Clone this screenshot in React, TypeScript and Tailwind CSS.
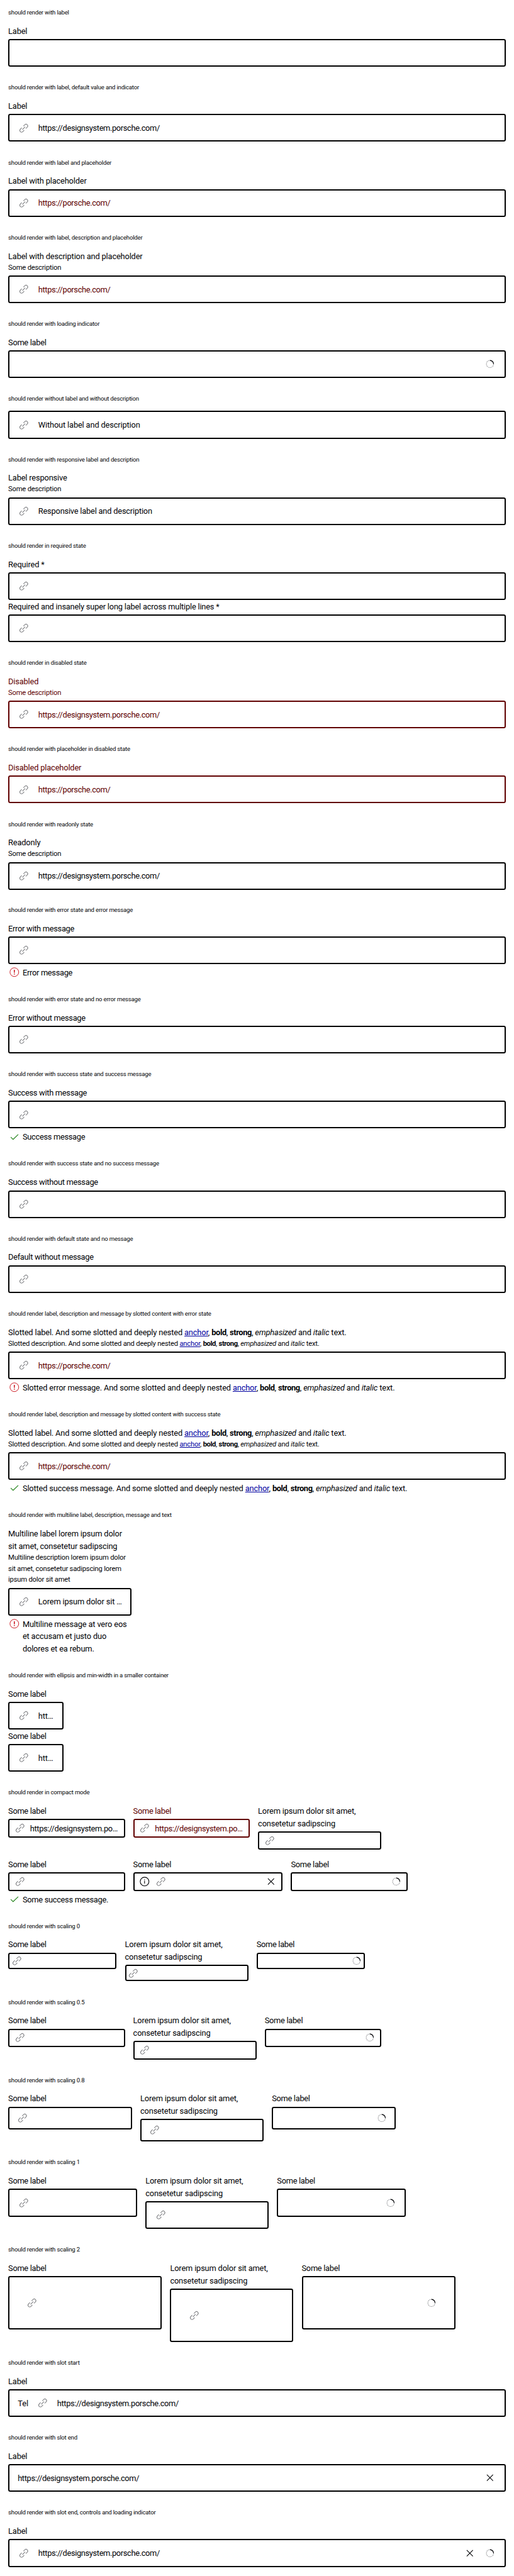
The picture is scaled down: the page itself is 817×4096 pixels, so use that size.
import type { ReactNode } from 'react';
import clsx from 'clsx';

/* ---------- icons (24 unit grid) ---------- */

const icon = 'size-6 shrink-0 overflow-visible';

function LinkIcon() {
  return (
    <svg viewBox="0 0 24 24" className={icon} fill="none" stroke="#88898c" strokeWidth="1.4">
      <g transform="rotate(-45 12 12)">
        <path d="M9.8 8.7H5.8a3.3 3.3 0 0 0 0 6.6H9.8" />
        <path d="M14.2 8.7h4a3.3 3.3 0 0 1 0 6.6h-4" />
        <path d="M8.2 12h7.6" />
      </g>
    </svg>
  );
}

function Spinner() {
  return (
    <svg viewBox="0 0 24 24" className={icon} fill="none">
      <circle cx="12" cy="12" r="7" stroke="#9fa0a3" strokeWidth="1.4" strokeDasharray="2.1 1.04" />
      <path d="M12 5a7 7 0 0 1 7 7" stroke="#010205" strokeWidth="1.4" />
    </svg>
  );
}

function CloseIcon() {
  return (
    <svg viewBox="0 0 24 24" className={icon} fill="none" stroke="#010205" strokeWidth="1.3">
      <path d="M6 6l12 12M18 6L6 18" />
    </svg>
  );
}

function InfoIcon() {
  return (
    <svg viewBox="0 0 24 24" className={icon} fill="none" stroke="#010205" strokeWidth="1.3">
      <circle cx="12" cy="12" r="8.5" />
      <path d="M12 10.3V16M12 7.8v1.3" />
    </svg>
  );
}

function ErrorIcon() {
  return (
    <svg viewBox="0 0 24 24" className={icon} fill="none" stroke="#cc1922" strokeWidth="1.2">
      <circle cx="12" cy="12" r="8.5" />
      <path d="M12 7.5v5.7M12 14.6v1.8" strokeWidth="1.9" />
    </svg>
  );
}

function CheckIcon() {
  return (
    <svg viewBox="0 0 24 24" className={icon} fill="none" stroke="#197e10" strokeWidth="1.3">
      <path d="M5 12.4l4.6 4.4L19.6 7.2" />
    </svg>
  );
}

/* ---------- building blocks ---------- */

function Section({ title, className, children }: { title: string; className?: string; children: ReactNode }) {
  return (
    <section className={clsx('px-4 pt-4', className ?? 'pb-4')}>
      <h2 className="mb-4 text-[9.56px] leading-4 tracking-[-0.18px] whitespace-nowrap">{title}</h2>
      {children}
    </section>
  );
}

const sizes = {
  s0: { box: 'h-8 px-0.5', gap: 'gap-1' },
  compact: { box: 'h-9 px-2', gap: 'gap-2' },
  s08: { box: 'h-11 px-3.25', gap: 'gap-3' },
  normal: { box: 'h-13.5 px-4', gap: 'gap-4' },
  s2: { box: 'h-26 px-8', gap: 'gap-8' },
};

type FieldProps = {
  label?: ReactNode;
  desc?: ReactNode;
  value?: string;
  placeholder?: boolean;
  disabled?: boolean;
  noIcon?: boolean;
  start?: ReactNode;
  end?: ReactNode;
  state?: 'error' | 'success';
  message?: ReactNode;
  size?: keyof typeof sizes;
  width?: string;
  /** tracking of the label text */
  track?: string;
  valueTrack?: string;
};

function Field({
  label,
  desc,
  value,
  placeholder,
  disabled,
  noIcon,
  start,
  end,
  state,
  message,
  size = 'normal',
  width,
  track = 'tracking-[-0.16px]',
  valueTrack = 'tracking-[-0.35px]',
}: FieldProps) {
  const s = sizes[size];
  return (
    <div className={clsx('flex flex-col', width, disabled ? 'text-[#600000]' : 'text-[#010205]')}>
      {label && <div className={clsx('-mb-[0.6px] pt-[0.6px] leading-6', track)}>{label}</div>}
      {desc && <div className="text-[11.19px] leading-5.5 tracking-[-0.19px]">{desc}</div>}
      <div
        className={clsx(
          'flex items-center rounded-[3.3px] border-2',
          s.box,
          s.gap,
          label && 'mt-1',
          disabled ? 'border-[#600000]' : 'border-black',
        )}
      >
        {start}
        {!noIcon && <LinkIcon />}
        <span
          className={clsx(
            'min-w-0 grow pt-px leading-6 whitespace-nowrap',
            valueTrack,
            placeholder && 'text-[#600000]',
          )}
        >
          {value}
        </span>
        {end}
      </div>
      {message && (
        <div className="mt-1 flex gap-1">
          {state === 'error' ? <ErrorIcon /> : <CheckIcon />}
          <div className={clsx('-mb-[0.6px] pt-[0.6px] leading-6', track)}>{message}</div>
        </div>
      )}
    </div>
  );
}

function Slotted({ lead }: { lead: string }) {
  return (
    <>
      {lead} And some slotted and deeply nested <a className="text-[#00009f] underline">anchor</a>,{' '}
      <b className="font-bold tracking-[-0.4px]">bold</b>, <strong className="font-bold tracking-[-0.4px]">strong</strong>,{' '}
      <em>emphasized</em> and <i>italic</i> text.
    </>
  );
}

const narrow = 'tracking-[-0.29px]';
const URL = 'https://designsystem.porsche.com/';
const SHORT_URL = 'https://porsche.com/';

const twoLines = (
  <>
    Lorem ipsum dolor sit amet,
    <br />
    consetetur sadipscing
  </>
);

function ScalingRow({ size, outer, inner }: { size: keyof typeof sizes; outer: string; inner: string }) {
  return (
    <div className="flex items-start gap-4">
      <Field label="Some label" track={narrow} size={size} width={outer} />
      <Field label={twoLines} size={size} width={inner} />
      <Field label="Some label" track={narrow} size={size} width={outer} noIcon end={<Spinner />} />
    </div>
  );
}

export default function App() {
  return (
    <main className="w-full bg-white font-['Roboto',sans-serif] text-[12.83px] text-[#010205] [--spacing:3.268px]">
      <Section title="should render with label">
        <Field label="Label" noIcon />
      </Section>
      <Section title="should render with label, default value and indicator">
        <Field label="Label" value={URL} />
      </Section>
      <Section title="should render with label and placeholder">
        <Field label="Label with placeholder" value={SHORT_URL} placeholder />
      </Section>
      <Section title="should render with label, description and placeholder">
        <Field label="Label with description and placeholder" desc="Some description" value={SHORT_URL} placeholder />
      </Section>
      <Section title="should render with loading indicator">
        <Field label="Some label" track={narrow} noIcon end={<Spinner />} />
      </Section>
      <Section title="should render without label and without description">
        <Field value="Without label and description" valueTrack="tracking-[-0.15px]" />
      </Section>
      <Section title="should render with responsive label and description">
        <Field
          label="Label responsive"
          desc="Some description"
          value="Responsive label and description"
          valueTrack="tracking-[-0.2px]"
        />
      </Section>
      <Section title="should render in required state">
        <Field label="Required *" />
        <Field
          label="Required and insanely super long label across multiple lines *"
          track="tracking-[-0.2px]"
        />
      </Section>
      <Section title="should render in disabled state">
        <Field label="Disabled" desc="Some description" value={URL} disabled />
      </Section>
      <Section title="should render with placeholder in disabled state">
        <Field label="Disabled placeholder" value={SHORT_URL} disabled placeholder />
      </Section>
      <Section title="should render with readonly state" className="pb-3.75">
        <Field label="Readonly" desc="Some description" value={URL} />
      </Section>
      <Section title="should render with error state and error message">
        <Field label="Error with message" track={narrow} state="error" message="Error message" />
      </Section>
      <Section title="should render with error state and no error message">
        <Field label="Error without message" track={narrow} />
      </Section>
      <Section title="should render with success state and success message">
        <Field label="Success with message" track={narrow} state="success" message="Success message" />
      </Section>
      <Section title="should render with success state and no success message">
        <Field label="Success without message" track={narrow} />
      </Section>
      <Section title="should render with default state and no message">
        <Field label="Default without message" track={narrow} />
      </Section>
      <Section title="should render label, description and message by slotted content with error state">
        <Field
          label={<Slotted lead="Slotted label." />}
          desc={<Slotted lead="Slotted description." />}
          value={SHORT_URL}
          placeholder
          state="error"
          message={<Slotted lead="Slotted error message." />}
        />
      </Section>
      <Section title="should render label, description and message by slotted content with success state">
        <Field
          label={<Slotted lead="Slotted label." />}
          desc={<Slotted lead="Slotted description." />}
          value={SHORT_URL}
          placeholder
          state="success"
          message={<Slotted lead="Slotted success message." />}
        />
      </Section>
      <Section title="should render with multiline label, description, message and text">
        <Field
          width="w-60 whitespace-nowrap"
          label={
            <>
              Multiline label lorem ipsum dolor
              <br />
              sit amet, consetetur sadipscing
            </>
          }
          desc={
            <>
              Multiline description lorem ipsum dolor
              <br />
              sit amet, consetetur sadipscing lorem
              <br />
              ipsum dolor sit amet
            </>
          }
          value="Lorem ipsum dolor sit …"
          valueTrack="tracking-[-0.15px]"
          state="error"
          message={
            <>
              Multiline message at vero eos
              <br />
              et accusam et justo duo
              <br />
              dolores et ea rebum.
            </>
          }
        />
      </Section>
      <Section title="should render with ellipsis and min-width in a smaller container">
        <Field label="Some label" track={narrow} width="w-27" value="htt…" valueTrack="tracking-[-0.1px]" />
        <Field label="Some label" track={narrow} width="w-27" value="htt…" valueTrack="tracking-[-0.1px]" />
      </Section>
      <Section title="should render in compact mode">
        <div className="flex flex-col gap-4">
          <div className="flex items-start gap-4">
            <Field label="Some label" track={narrow} size="compact" width="w-56.75" value="https://designsystem.po…" />
            <Field
              label="Some label"
              track={narrow}
              size="compact"
              width="w-56.75"
              value="https://designsystem.po…"
              disabled
            />
            <Field label={twoLines} size="compact" width="w-60" />
          </div>
          <div className="flex items-start gap-4">
            <Field
              label="Some label"
              track={narrow}
              size="compact"
              width="w-56.75"
              state="success"
              message="Some success message."
            />
            <Field
              label="Some label"
              track={narrow}
              size="compact"
              width="w-72.75"
              start={<InfoIcon />}
              end={<CloseIcon />}
            />
            <Field label="Some label" track={narrow} size="compact" width="w-56.75" noIcon end={<Spinner />} />
          </div>
        </div>
      </Section>
      <Section title="should render with scaling 0">
        <ScalingRow size="s0" outer="w-52.75" inner="w-60" />
      </Section>
      <Section title="should render with scaling 0.5">
        <ScalingRow size="compact" outer="w-56.75" inner="w-60" />
      </Section>
      <Section title="should render with scaling 0.8">
        <ScalingRow size="s08" outer="w-60.25" inner="w-60" />
      </Section>
      <Section title="should render with scaling 1">
        <ScalingRow size="normal" outer="w-62.75" inner="w-60" />
      </Section>
      <Section title="should render with scaling 2">
        <ScalingRow size="s2" outer="w-74.75" inner="w-60" />
      </Section>
      <Section title="should render with slot start">
        <Field label="Label" start={<span className="pt-px leading-6">Tel</span>} value={URL} />
      </Section>
      <Section title="should render with slot end">
        <Field label="Label" noIcon value={URL} end={<CloseIcon />} />
      </Section>
      <Section title="should render with slot end, controls and loading indicator">
        <Field
          label="Label"
          value={URL}
          end={
            <>
              <CloseIcon />
              <Spinner />
            </>
          }
        />
      </Section>
    </main>
  );
}
